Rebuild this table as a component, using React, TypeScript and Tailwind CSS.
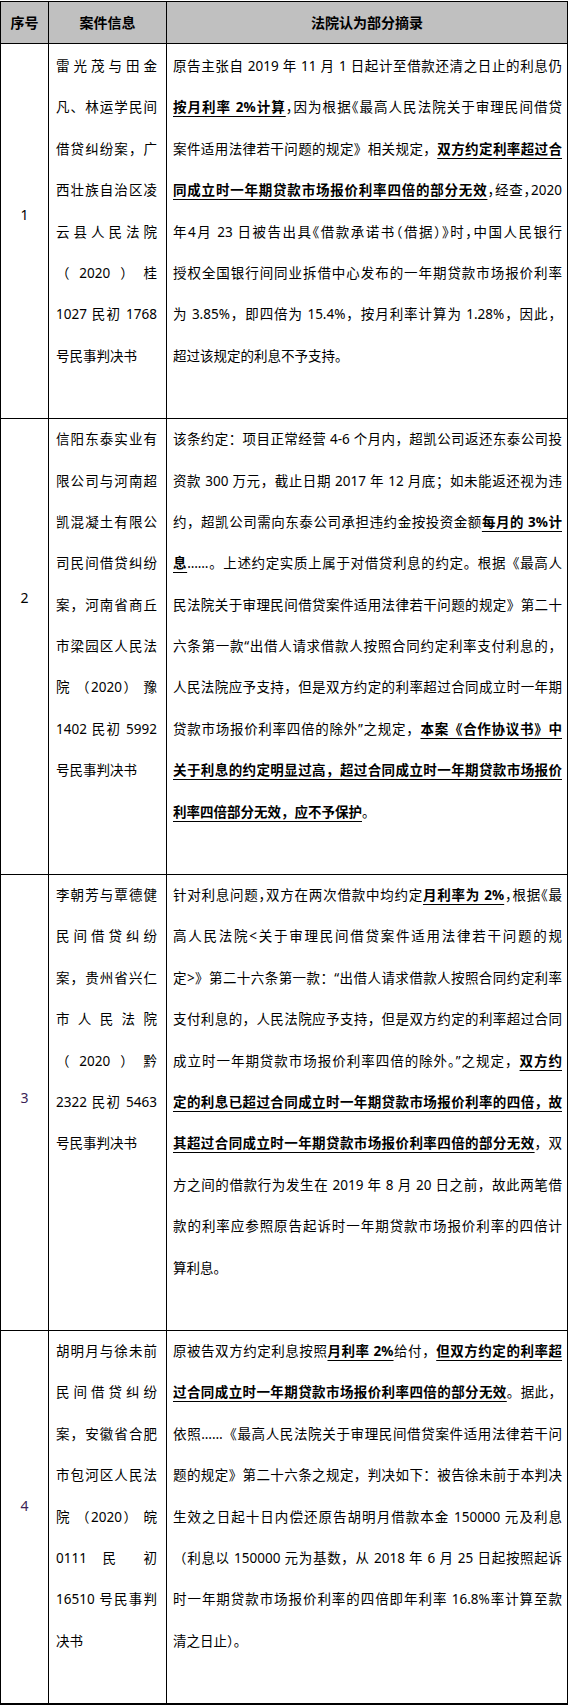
const ROWS = [
  {
    no: "1",
    numClass: "text-black pb-[34px]",
    pad: "pt-[2px]",
    left: [
      "雷光茂与田金",
      "凡、林运学民间",
      "借贷纠纷案，广",
      "西壮族自治区凌",
      "云县人民法院",
      "（2020）桂",
      "1027 民初 1768",
      "号民事判决书",
    ],
    right: [
      "原告主张自 2019 年 11 月 1 日起计至借款还清之日止的利息仍",
      "~**按月利率 2%计算**，因为根据《最高人民法院关于审理民间借贷",
      "案件适用法律若干问题的规定》相关规定，**双方约定利率超过合**",
      "~**同成立时一年期贷款市场报价利率四倍的部分无效**，经查，2020",
      "~年4月 23 日被告出具《借款承诺书（借据）》时，中国人民银行",
      "授权全国银行间同业拆借中心发布的一年期贷款市场报价利率",
      "为 3.85%，即四倍为 15.4%，按月利率计算为 1.28%，因此，",
      "超过该规定的利息不予支持。",
    ],
  },
  {
    no: "2",
    numClass: "text-black pb-[98px]",
    pad: "pt-0",
    left: [
      "信阳东泰实业有",
      "限公司与河南超",
      "凯混凝土有限公",
      "司民间借贷纠纷",
      "案，河南省商丘",
      "市梁园区人民法",
      "院 （2020） 豫",
      "1402 民初 5992",
      "号民事判决书",
    ],
    right: [
      "该条约定：项目正常经营 4-6 个月内，超凯公司返还东泰公司投",
      "资款 300 万元，截止日期 2017 年 12 月底；如未能返还视为违",
      "约，超凯公司需向东泰公司承担违约金按投资金额**每月的 3%计**",
      "**息**……。上述约定实质上属于对借贷利息的约定。根据《最高人",
      "民法院关于审理民间借贷案件适用法律若干问题的规定》第二十",
      "六条第一款“出借人请求借款人按照合同约定利率支付利息的，",
      "人民法院应予支持，但是双方约定的利率超过合同成立时一年期",
      "贷款市场报价利率四倍的除外”之规定，**本案《合作协议书》中**",
      "**关于利息的约定明显过高，超过合同成立时一年期贷款市场报价**",
      "**利率四倍部分无效，应不予保护**。",
    ],
  },
  {
    no: "3",
    numClass: "text-[#3b1f56] pb-[10px]",
    pad: "pt-0",
    left: [
      "李朝芳与覃德健",
      "民间借贷纠纷",
      "案，贵州省兴仁",
      "市人民法院",
      "（2020）黔",
      "2322 民初 5463",
      "号民事判决书",
    ],
    right: [
      "~针对利息问题，双方在两次借款中均约定**月利率为 2%**，根据《最",
      "高人民法院<关于审理民间借贷案件适用法律若干问题的规",
      "定>》第二十六条第一款：“出借人请求借款人按照合同约定利率",
      "支付利息的，人民法院应予支持，但是双方约定的利率超过合同",
      "成立时一年期贷款市场报价利率四倍的除外。”之规定，**双方约**",
      "**定的利息已超过合同成立时一年期贷款市场报价利率的四倍，故**",
      "**其超过合同成立时一年期贷款市场报价利率四倍的部分无效**，双",
      "方之间的借款行为发生在 2019 年 8 月 20 日之前，故此两笔借",
      "款的利率应参照原告起诉时一年期贷款市场报价利率的四倍计",
      "算利息。",
    ],
  },
  {
    no: "4",
    numClass: "text-[#3b1f56] pb-[23px]",
    pad: "pt-0",
    left: [
      "胡明月与徐未前",
      "民间借贷纠纷",
      "案，安徽省合肥",
      "市包河区人民法",
      "院 （2020） 皖",
      "0111 民 初",
      "16510 号民事判",
      "决书",
    ],
    right: [
      "原被告双方约定利息按照**月利率 2%**给付，**但双方约定的利率超**",
      "**过合同成立时一年期贷款市场报价利率四倍的部分无效**。据此，",
      "依照……《最高人民法院关于审理民间借贷案件适用法律若干问",
      "题的规定》第二十六条之规定，判决如下：被告徐未前于本判决",
      "生效之日起十日内偿还原告胡明月借款本金 150000 元及利息",
      "（利息以 150000 元为基数，从 2018 年 6 月 25 日起按照起诉",
      "时一年期贷款市场报价利率的四倍即年利率 16.8%率计算至款",
      "清之日止）。",
    ],
  },
];

// "**...**" marks bold underlined text, a leading "~" compresses punctuation
function Line({ text, last }: { text: string; last: boolean }) {
  const halt = text.startsWith("~");
  const parts = (halt ? text.slice(1) : text).split("**");
  return (
    <div
      className={`h-[41.4px] leading-[41.4px] ${
        last ? "text-left" : "text-justify [text-align-last:justify]"
      } ${halt ? "[font-feature-settings:'halt']" : ""}`}
    >
      {parts.map((p, i) =>
        i % 2 === 1 ? (
          <span
            key={i}
            className="font-bold underline decoration-1 underline-offset-[4px]"
          >
            {p}
          </span>
        ) : (
          <span key={i}>{p}</span>
        )
      )}
    </div>
  );
}

export default function App() {
  return (
    <div className="bg-white pt-[1px] font-['Noto_Sans','Noto_Sans_CJK_SC',sans-serif] text-[13.5px] text-black">
      <table className="w-[567px] table-fixed border-collapse">
        <colgroup>
          <col className="w-[48px]" />
          <col className="w-[118px]" />
          <col className="w-[401px]" />
        </colgroup>
        <thead>
          <tr className="h-[42px] bg-[#c0c0c0] text-[14px] font-bold">
            <th className="border border-black text-center">序号</th>
            <th className="border border-black text-center">案件信息</th>
            <th className="border border-black text-center">法院认为部分摘录</th>
          </tr>
        </thead>
        <tbody>
          {ROWS.map((row, ri) => {
            const bottom = ri === ROWS.length - 1 ? "border-b-2" : "";
            return (
              <tr key={row.no}>
                <td
                  className={`border border-black text-center align-middle text-[14px] ${row.numClass} ${bottom}`}
                >
                  {row.no}
                </td>
                <td
                  className={`border border-black align-top pl-[7px] pr-[9px] ${row.pad} pb-[41px] ${bottom}`}
                >
                  {row.left.map((l, i) => (
                    <Line key={i} text={l} last={i === row.left.length - 1} />
                  ))}
                </td>
                <td
                  className={`border border-black align-top pl-[6px] pr-[5px] ${row.pad} pb-[41px] ${bottom}`}
                >
                  {row.right.map((l, i) => (
                    <Line key={i} text={l} last={i === row.right.length - 1} />
                  ))}
                </td>
              </tr>
            );
          })}
        </tbody>
      </table>
    </div>
  );
}
